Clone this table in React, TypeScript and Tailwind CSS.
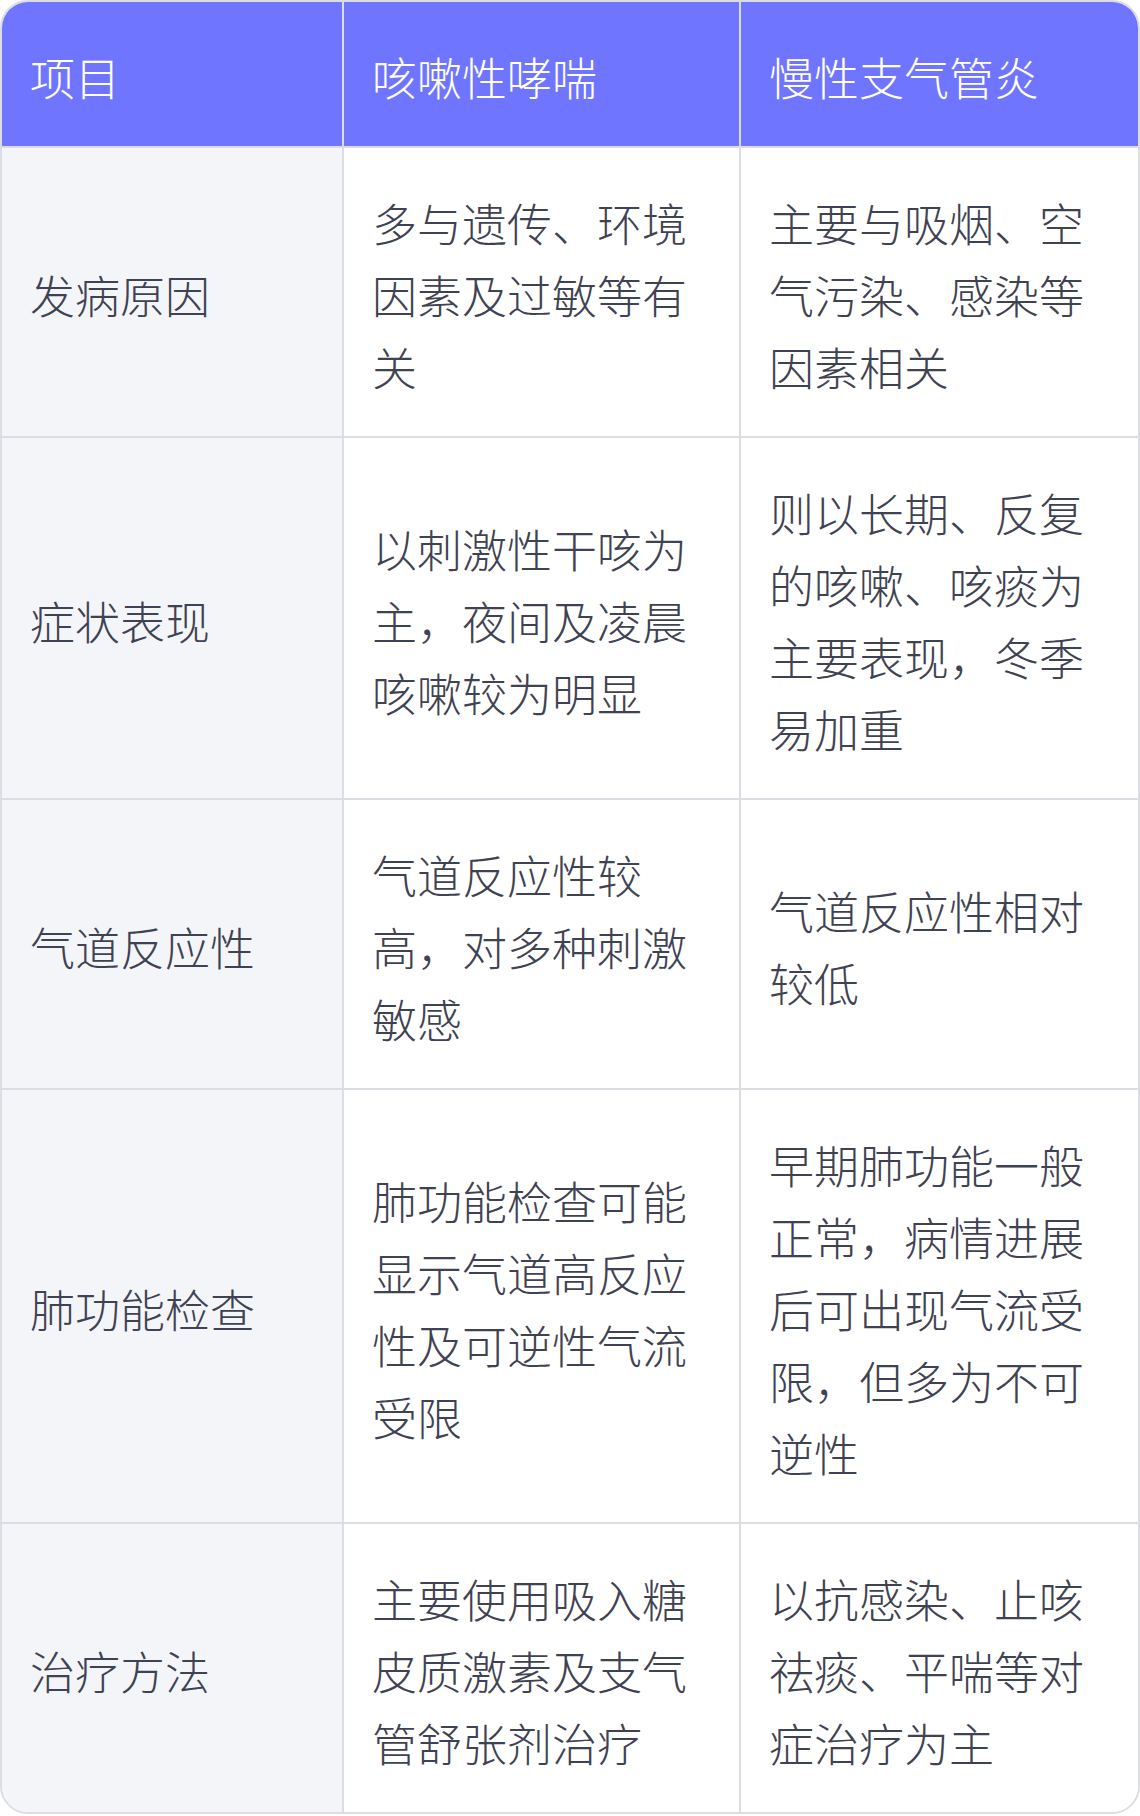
const rows: [string, string, string][] = [
  ["发病原因", "多与遗传、环境因素及过敏等有关", "主要与吸烟、空气污染、感染等因素相关"],
  ["症状表现", "以刺激性干咳为主，夜间及凌晨咳嗽较为明显", "则以长期、反复的咳嗽、咳痰为主要表现，冬季易加重"],
  ["气道反应性", "气道反应性较高，对多种刺激敏感", "气道反应性相对较低"],
  ["肺功能检查", "肺功能检查可能显示气道高反应性及可逆性气流受限", "早期肺功能一般正常，病情进展后可出现气流受限，但多为不可逆性"],
  ["治疗方法", "主要使用吸入糖皮质激素及支气管舒张剂治疗", "以抗感染、止咳祛痰、平喘等对症治疗为主"],
];

export default function App() {
  return (
    <div className="w-[1140px] bg-white font-['Noto_Sans_CJK_SC','Noto_Sans',sans-serif] font-light text-[45px] leading-[72px]">
      <div className="grid grid-cols-[342px_397px_1fr] overflow-hidden rounded-[28px] border-2 border-[#dcdde3]">
        {["项目", "咳嗽性哮喘", "慢性支气管炎"].map((h, i) => (
          <div
            key={h}
            className={`flex items-center bg-[#7075ff] px-[28px] pt-[39px] pb-[33px] text-white border-b-2 border-[#dcdde3] ${i < 2 ? "border-r-2" : ""}`}
          >
            {h}
          </div>
        ))}
        {rows.map((r, ri) =>
          r.map((c, ci) => (
            <div
              key={`${ri}-${ci}`}
              className={`flex items-center px-[28px] pt-[39px] pb-[33px] text-[#3f4252] border-[#dcdde3] ${ci < 2 ? "border-r-2" : ""} ${ri < rows.length - 1 ? "border-b-2" : ""} ${ci === 0 ? "bg-[#f4f5f9]" : "bg-white"}`}
            >
              <span>{c}</span>
            </div>
          ))
        )}
      </div>
    </div>
  );
}
